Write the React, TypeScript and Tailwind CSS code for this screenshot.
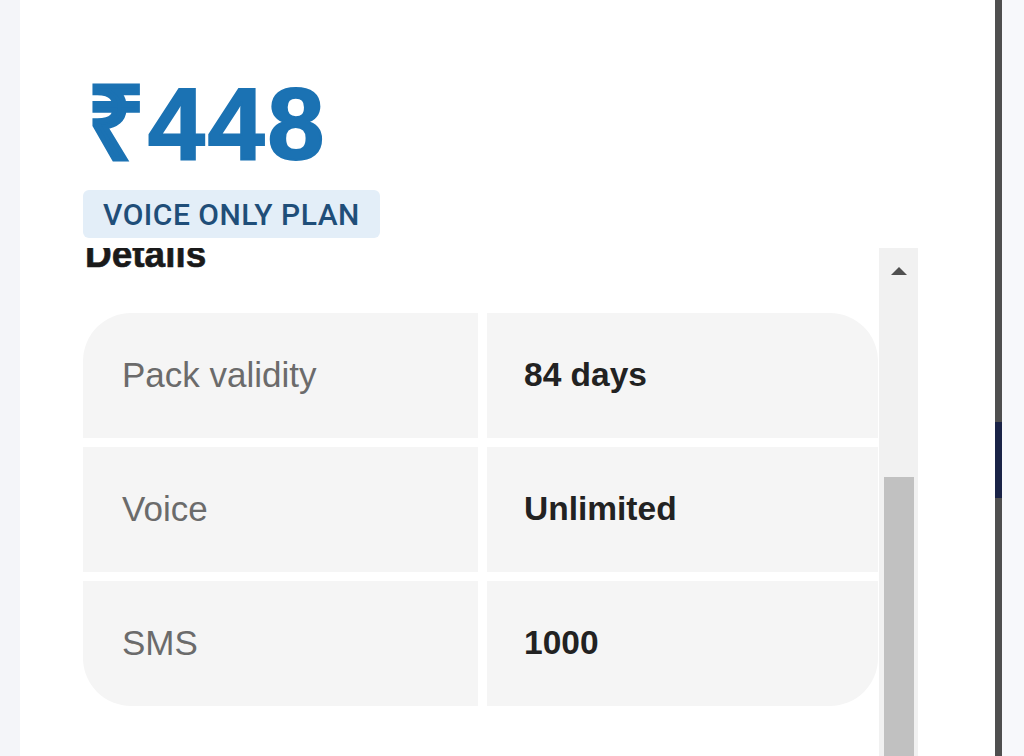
import React from "react";

const rows = [
  { label: "Pack validity", value: "84 days" },
  { label: "Voice", value: "Unlimited" },
  { label: "SMS", value: "1000" },
];

export default function App() {
  return (
    <div
      className="w-[1024px] h-[756px] flex overflow-hidden bg-[#f5f6fa]"
      style={{ fontFamily: '"Liberation Sans", Arial, sans-serif' }}
    >
      <div className="w-[20px] shrink-0 bg-[#f4f5f9]" />
      <div className="flex-1 bg-white flex flex-col pl-[63px]">
        <div className="mt-[73px] h-[102px] pl-[4px] text-[102px] leading-none font-bold text-[#1b72b3] tracking-[3px] [-webkit-text-stroke:2px_#1b72b3]">
          ₹448
        </div>
        <div className="mt-[15px] self-start h-[48px] px-[20px] rounded-[6px] bg-[#e3eef8] flex items-center">
          <span
            className="text-[30px] font-medium text-[#1f4e79] tracking-[0.5px]"
            style={{ fontFamily: 'Roboto, "Liberation Sans", sans-serif' }}
          >
            VOICE ONLY PLAN
          </span>
        </div>
        <div className="mt-[10px] flex h-[508px]">
          <div className="w-[795px] overflow-hidden">
            <div className="-mt-[12px] h-[37px] text-[37px] leading-none font-bold text-[#1a1a1a] pl-[2px] [-webkit-text-stroke:0.6px_#1a1a1a]">
              Details
            </div>
            <div className="mt-[40px] rounded-[48px] overflow-hidden flex flex-col gap-[9px]">
              {rows.map((r) => (
                <div key={r.label} className="grid grid-cols-[395px_391px] gap-[9px] h-[125px]">
                  <div className="bg-[#f5f5f5] flex items-center pl-[39px] text-[35px] text-[#6b6b6b]">
                    {r.label}
                  </div>
                  <div className="bg-[#f5f5f5] flex items-center pl-[37px] text-[33.5px] font-bold text-[#222222]">
                    {r.value}
                  </div>
                </div>
              ))}
            </div>
          </div>
          <div className="ml-[1px] w-[39px] bg-[#f1f1f1] flex flex-col items-center">
            <div className="mt-[18px] h-[10px] flex items-center justify-center">
              <svg width="16" height="8" viewBox="0 0 16 8">
                <polygon points="8,0 16,8 0,8" fill="#505050" />
              </svg>
            </div>
            <div className="mt-[201px] w-[30px] flex-1 bg-[#c1c1c1]" />
          </div>
        </div>
      </div>
      <div className="w-[7px] shrink-0 flex flex-col bg-[#4f4f4f]">
        <div className="h-[422px]" />
        <div className="h-[76px] bg-[#1a2347]" />
      </div>
      <div className="w-[22px] shrink-0 bg-[#f7f8fb]" />
    </div>
  );
}
